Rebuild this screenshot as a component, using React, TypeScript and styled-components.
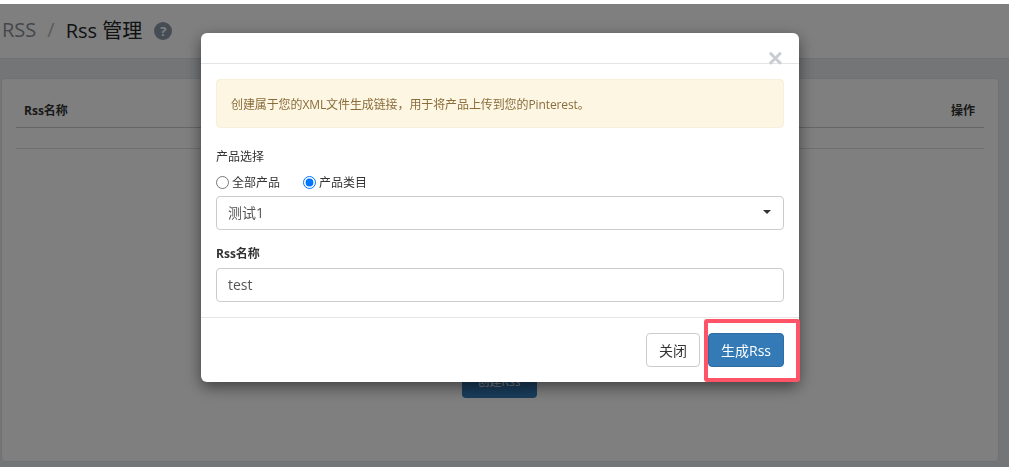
import React from "react";
import styled, { createGlobalStyle } from "styled-components";

const FONT = `"Open Sans", "Noto Sans CJK SC", sans-serif`;

const Global = createGlobalStyle`
  html, body { margin: 0; padding: 0; background: #fff; }
  body { width: 1009px; height: 467px; overflow: hidden; font-family: ${FONT}; color: #333; }
  * { box-sizing: border-box; }
`;

const Page = styled.div`
  width: 1009px; height: 467px; padding-top: 4px; background: #fff; overflow: hidden;
`;
const Shell = styled.div`
  height: 463px; background: #e9ebee; display: flex; flex-direction: column;
`;
const Header = styled.header`
  height: 55px; flex: none; background: #fff; border-bottom: 1px solid #dee2e6;
  display: flex; align-items: center; padding: 0 0 4px 2px; font-size: 20px; gap: 11px;
`;
const Crumb = styled.span`color: #8a8f96;`;
const Sep = styled.span`color: #b5b9be;`;
const Title = styled.span`color: #212529;`;
const Help = styled.span`
  width: 18px; height: 18px; margin: 3px 0 0 1px; border-radius: 50%; background: #8d99a8; color: #fff;
  font-size: 13px; font-weight: 700; display: flex; align-items: center; justify-content: center;
`;
const Content = styled.main`flex: 1; padding: 19px 10px 5px 1px;`;
const Card = styled.section`
  height: 100%; background: #fff; border: 1px solid #dfe2e6; border-radius: 4px; padding: 19px 14px 0;
  display: flex; flex-direction: column; align-items: stretch;
`;
const THead = styled.div`
  height: 30px; display: flex; justify-content: space-between; align-items: center; padding: 0 9px 6px 8px;
  border-bottom: 1px solid #ccc; font-size: 12px; font-weight: 700; color: #333;
`;
const TBody = styled.div`height: 21px; border-bottom: 1px solid #ddd;`;
const Create = styled.button`
  align-self: center; margin: 214px 2px 0 0; width: 75px; height: 35px; border: 0; border-radius: 4px;
  background: #337ab7; color: #fff; font: 12px ${FONT};
`;
const Backdrop = styled.div`
  position: fixed; left: 0; top: 4px; width: 1009px; height: 463px; background: rgba(0,0,0,.5);
`;
const Modal = styled.div`
  position: fixed; left: 201px; top: 33px; width: 598px; height: 349px; background: #fff;
  border-radius: 6px; box-shadow: 0 5px 15px rgba(0,0,0,.5); display: flex; flex-direction: column;
`;
const ModalHead = styled.div`height: 31px; flex: none; border-bottom: 1px solid #e5e5e5; position: relative;`;
const CloseX = styled.span`
  position: absolute; right: 16px; top: 12px; color: #c9ccd0; font: 700 26px/26px "Liberation Sans", sans-serif;
`;
const ModalBody = styled.div`flex: 1; padding: 15px 15px 0; display: flex; flex-direction: column;`;
const Alert = styled.div`
  height: 49px; flex: none; background: #fcf6e3; border: 1px solid #f8eedb; border-radius: 4px;
  color: #8a6d3b; font-size: 12px; letter-spacing: -0.1px; display: flex; align-items: center; padding-left: 14px;
`;
const Label = styled.div<{ $bold?: boolean }>`
  font-size: 12px; line-height: 17px; color: #333; font-weight: ${p => (p.$bold ? 700 : 400)};
  margin-top: ${p => (p.$bold ? 15 : 20)}px;
`;
const RadioRow = styled.div`display: flex; gap: 23px; height: 18px; margin: 8px 0 -1px; font-size: 12px; align-items: center;`;
const RadioLabel = styled.label`display: flex; align-items: center; gap: 3px;`;
const Radio = styled.input`width: 13px; height: 13px; margin: 0; accent-color: #0075ff;`;
const Field = styled.div`
  height: 34px; flex: none; margin-top: 6px; border: 1px solid #ccc; border-radius: 4px; padding: 0 12px 2px 11px; font-size: 14px; color: #555;
  display: flex; align-items: center; justify-content: space-between;
`;
const Caret = styled.span`width: 0; height: 0; border: 4px solid transparent; border-top-color: #333; border-bottom: 0;`;
const ModalFoot = styled.div`
  height: 65px; flex: none; border-top: 1px solid #e5e5e5; padding: 15px 15px 0; display: flex; justify-content: flex-end; gap: 8px;
`;
const Btn = styled.button<{ $primary?: boolean }>`
  height: 34px; padding: 0; border-radius: 4px; font: 14px ${FONT};
  width: ${p => (p.$primary ? 76 : 54)}px;
  background: ${p => (p.$primary ? "#337ab7" : "#fff")};
  color: ${p => (p.$primary ? "#fff" : "#333")};
  border: 1px solid ${p => (p.$primary ? "#2e6da4" : "#ccc")};
`;
const Highlight = styled.div`
  position: fixed; left: 704px; top: 319px; width: 96px; height: 63px; border: 4px solid #ff5468; border-radius: 3px; pointer-events: none;
`;

export default function App() {
  return (
    <Page>
      <Global />
      <Shell>
        <Header>
          <Crumb>RSS</Crumb><Sep>/</Sep><Title>Rss 管理</Title><Help>?</Help>
        </Header>
        <Content>
          <Card>
            <THead><span>Rss名称</span><span>操作</span></THead>
            <TBody />
            <Create>创建Rss</Create>
          </Card>
        </Content>
      </Shell>
      <Backdrop />
      <Modal>
        <ModalHead><CloseX>×</CloseX></ModalHead>
        <ModalBody>
          <Alert>创建属于您的XML文件生成链接，用于将产品上传到您的Pinterest。</Alert>
          <Label>产品选择</Label>
          <RadioRow>
            <RadioLabel><Radio type="radio" name="p" readOnly />全部产品</RadioLabel>
            <RadioLabel><Radio type="radio" name="p" defaultChecked />产品类目</RadioLabel>
          </RadioRow>
          <Field>测试1<Caret /></Field>
          <Label $bold>Rss名称</Label>
          <Field>test</Field>
        </ModalBody>
        <ModalFoot>
          <Btn>关闭</Btn>
          <Btn $primary>生成Rss</Btn>
        </ModalFoot>
      </Modal>
      <Highlight />
    </Page>
  );
}
